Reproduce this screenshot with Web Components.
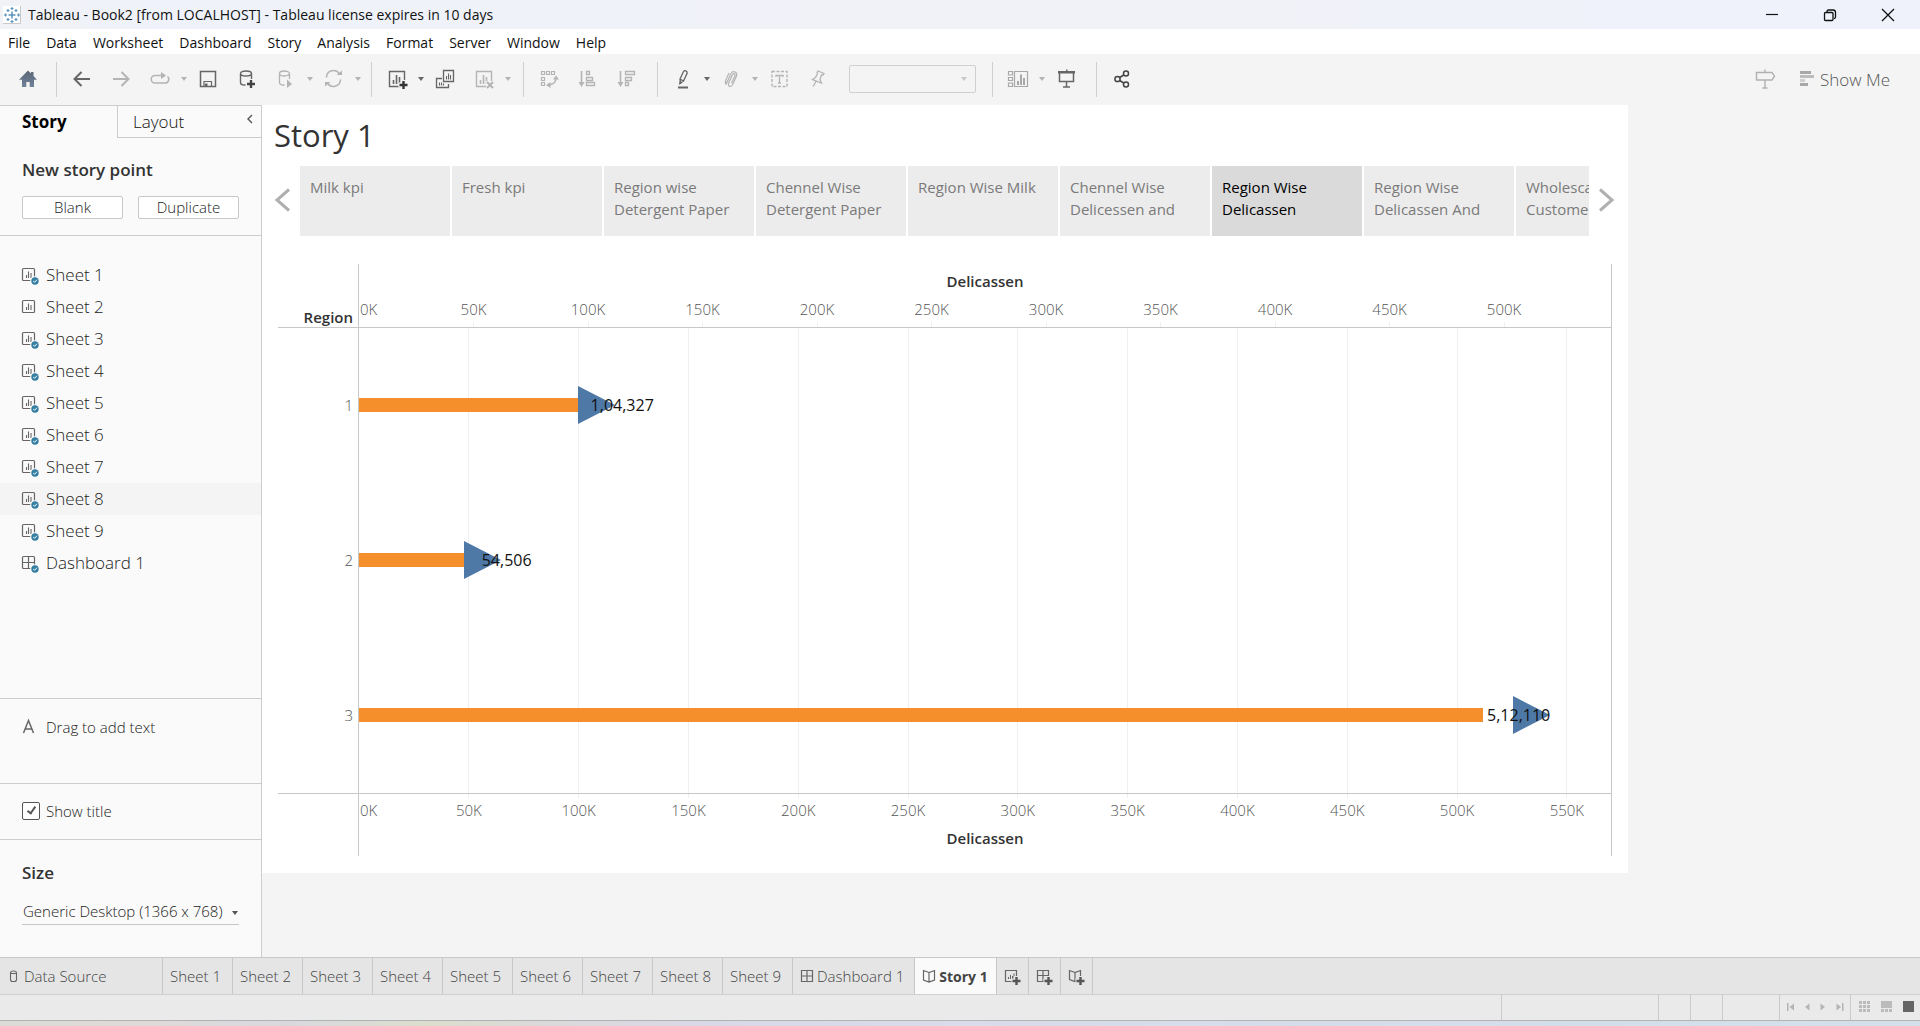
<!DOCTYPE html>
<html lang="en">
<head>
<meta charset="utf-8">
<title>Tableau - Book2</title>
<style>
  html, body { height: 100%; margin: 0; }
  body { font-family: "Open Sans", "Noto Sans", sans-serif; overflow: hidden; }
</style>
</head>
<body>
<tableau-app></tableau-app>

<script>
const G = '#666', L = '#b4b4b4';
const plus = (x, y, c = '#444') => `<path d="M${x} ${y - 4}v8M${x - 4} ${y}h8" stroke="${c}" stroke-width="2.4" fill="none"/>`;
const halo = (x, y) => `<path d="M${x} ${y - 5}v10M${x - 5} ${y}h10" stroke="var(--halo,#f4f4f4)" stroke-width="5" fill="none"/>`;
const stroke = (d, c = G, w = 1) => `<path d="${d}" fill="none" stroke="${c}" stroke-width="${w}"/>`;
const fill = (d, c = G) => `<path d="${d}" fill="${c}"/>`;
const chartBox = c => stroke('M4.5 4.5h15v15h-15z', c, 1.4) + stroke('M8.5 17v-4M11.5 17V8M14.5 17v-7M17 17v-3', c, 1.6);
const check = '<circle cx="16" cy="16" r="4.8" fill="#fafafa"/><circle cx="16" cy="16" r="3.7" fill="#367fa3"/><path d="M14.3 16l1.3 1.3 2.3-2.6" fill="none" stroke="#fff"/>';
const miniChart = '<rect x="3.5" y="3.5" width="12" height="12" rx="1" fill="none" stroke="#666" stroke-width="1.2"/>' + stroke('M7.5 13v-3M9.5 13V6.5M12 13V8', G, 1.1);
const miniGrid = '<rect x="3.5" y="3.5" width="12" height="12" rx="1" fill="none" stroke="#666" stroke-width="1.2"/>' + stroke('M9.5 3.5v12M3.5 9.5h12', G, 1.2);

const ICONS = {
  home: [24, '<defs><linearGradient id="h" x2="0" y2="1"><stop stop-color="#5a6674"/><stop offset="1" stop-color="#71839a"/></linearGradient></defs><path fill="url(#h)" d="M12 3.5l3 3V5h2.5v4l3.5 3.800h-3V20h-4.300v-5h-3.400v5H6v-7.200H3z"/>'],
  back: [24, stroke('M20 12H5M11.5 5l-7 7 7 7', G, 2)],
  forward: [24, stroke('M4 12h15M12.5 5l7 7-7 7', L, 2)],
  redo: [24, stroke('M14 8.5H7a3.700 3.700 0 0 0 0 7.5h10a3.700 3.700 0 0 0 2.5-6.5', L, 1.5) + fill('M13 5l5 3.5-5 3.5z', L)],
  save: [24, stroke('M4.5 4.5h15v15h-15z', G, 1.5) + stroke('M8 19v-4.5h7.5V19', G, 1.2) + fill('M9 16.5h2.5V19H9z')],
  dbadd: [24, stroke('M5.5 6.5v9q0 2.5 4 2.5h1M16.5 6.5V12M5.5 6.5a5.5 2.5 0 0 1 11 0a5.5 2.5 0 0 1-11 0z', G, 1.4) + plus(16, 17)],
  dbplay: [24, stroke('M5.5 6.5v9q0 2.5 4 2.5h1M15.5 6.5V12M5.5 6.5a5 2.5 0 0 1 10 0a5 2.5 0 0 1-10 0z', L, 1.3) + fill('M13 12.5v8.5l5-4z', L)],
  refresh: [24, stroke('M4.500 10.500a7 7 0 0 1 13-3.500M18.500 12.500a7 7 0 0 1-13 3.500', L, 1.5) + fill('M14.500 8h5.500V3.500zM8.500 15H3v4.500z', L)],
  chartadd: [24, chartBox(G) + halo(18.5, 18) + plus(18.5, 18, '#333')],
  duplicate: [24, stroke('M9 11.5H3.5v9h12V17', G, 1.3) + stroke('M10.5 3.5h10v11h-10z', G, 1.3) + stroke('M13.5 12.5V9M15.5 12.5V6.5M17.5 12.5V8M6.5 18.5v-3M8.5 18.5v-3M10.5 18.5v-2', G, 1.1)],
  chartx: [24, chartBox(L) + '<path d="M14 14h8v8h-8z" fill="#f4f4f4"/>' + stroke('M15 15l6 6M21 15l-6 6', L, 2)],
  swap: [24, stroke('M4.5 4.5h3v3h-3zM9.5 4.5h3v3h-3zM14.5 4.5h3v3h-3zM4.5 10.5h3v3h-3zM4.5 15.5h3v3h-3z', L, 1.2) + stroke('M19 11q0 6-7 7', L, 1.3) + fill('M16 12.5h6l-3-4zM13.5 15v6l-4.5-3z', L)],
  asc: [24, stroke('M5.5 4v12', L, 1.6) + fill('M2.5 15h6l-3 5z', L) + stroke('M10.5 4.5h3v3h-3zM10.5 10.5h6v3h-6zM10.5 15.5h8v3h-8z', L, 1.3)],
  desc: [24, stroke('M5.5 4v12', L, 1.6) + fill('M2.5 15h6l-3 5z', L) + stroke('M10.5 4.5h9v3h-9zM10.5 10.5h6v3h-6zM10.5 15.5h3v3h-3z', L, 1.3)],
  pen: [24, stroke('M9 12l3.500-7.500q.8-1.200 2.300-.6t1.400 2.100L12.500 14 9.500 16zM9 12l3.500 2', G, 1.3) + fill('M8.500 14l-.5 4 3-2zM7 19.5h10v2H7z')],
  clip: [24, stroke('M7 17.5l5-11q1.5-2.5 4-1.5t1.5 4l-4 9q-1.5 2-3 1.300t-1-3l4-8.5q1-1.5 2-1t.5 2l-3.5 7.5M7 17.5q-1.5-3 .5-6L10 6', L, 1.2)],
  textbox: [24, '<path d="M5 4.5h15v15H5z" fill="none" stroke="#b4b4b4" stroke-width="1.4" stroke-dasharray="3 1.5"/>' + stroke('M9 10V8.5h7V10M12.5 8.5V16M11 16h3', L, 1.3)],
  pin: [24, stroke('M12 4l6 2.500-1 1.500-1.5 0-1.5 4.5 1.5 3.500-9-3.500 3-2 2-4-.5-1zM10 14.500l-3 5', L, 1.3)],
  fit: [24, stroke('M2.5 4.5h4v3.5h-4zM2.5 10.5h4v3h-4zM2.5 16h4v3.5h-4zM8.5 4.5h13v15h-13z', '#a8a8a8', 1.2) + stroke('M12 18v-4M15 18V7.5M18 18v-7', '#a8a8a8', 2)],
  present: [24, fill('M4 4h17v2.5H4zM12 2.5h1.5V4H12z') + stroke('M5.5 6v8.5h14V6M12.5 14.5v5M9 20h7', G, 1.5)],
  share: [24, '<g fill="none" stroke="#444" stroke-width="1.5"><circle cx="7.5" cy="12" r="2.6"/><circle cx="16" cy="6.5" r="2.5"/><circle cx="16" cy="17.5" r="2.5"/><path d="M9.700 10.5l4-2.5M9.700 13.5l4 2.5"/></g>'],
  sign: [24, stroke('M3.5 5.5h15.5l2.5 3.700-2.5 3.800H3.5zM12 2.5v3M12 13v8M9.5 21h5', '#b0b0b0', 1.4)],
  showme: [16, fill('M1 0h11v3H1zM1 12h8v3H1z', '#a8a8a8') + fill('M1 4h14v3H1z', '#bcbcbc') + fill('M1 8h5v3H1z', '#cfcfcf')],
  sheet: [24, miniChart],
  sheetcheck: [24, miniChart + check],
  dashcheck: [24, miniGrid + check],
  letterA: [24, stroke('M4.5 16L9.500 3.5 14.500 16M6 12h7', G, 1.5)],
  collapse: [24, stroke('M15 8l-4 4 4 4', '#555', 1.4)],
  db: [14, stroke('M3.500 4v6.5q0 2 2 2h2q2 0 2-2V4a3 2 0 0 0-6 0zM3.500 4.5h6', G, 1.1)],
  grid: [14, stroke('M1.5 1.5h11v11h-11zM7 1.5v11M1.5 7h11', G, 1.2)],
  book: [14, stroke('M7 3.5L1.5 1.5v9.5l5.5 2 5.5-2V1.5zM7 3.5V13', G, 1.2)],
  addsheet: [20, stroke('M3.5 4.5h11v11h-11z', G, 1.2) + stroke('M6.5 13v-2M8.5 13V9M10.5 13v-3M12 13V7.5', G, 1) + halo(14.5, 15) + plus(14.5, 15, '#555')],
  adddash: [20, stroke('M3.5 4.5h11v11h-11zM9 4.5v11M3.5 9.5h11', G, 1.2) + halo(14.5, 15) + plus(14.5, 15, '#555')],
  addstory: [20, stroke('M9 6.5L3.5 4.5v9l5.5 2 5.5-2v-9zM9 6.5v9', G, 1.2) + halo(14.5, 15) + plus(14.5, 15, '#555')],
  prev: [24, stroke('M18 1.5L6 12l12 10.5', '#b0b0b0', 3)],
  next: [24, stroke('M6 1.5L18 12 6 22.5', '#b0b0b0', 3)],
  min: [14, stroke('M1 6.5h12', '#111', 1.2)],
  restore: [14, stroke('M4 4V3.5Q4 2 5.5 2H10q2.5 0 2.5 2.5V9q0 1.5-1.5 1.5M1.5 5.5q0-1 1-1H9q1 0 1 1v6q0 1-1 1H2.5q-1 0-1-1z', '#111', 1.3)],
  close: [14, stroke('M1 1l12 12M13 1L1 13', '#111', 1.3)],
  caret: [8, fill('M1 2h6L4 6z', 'currentColor')],
  first: [12, fill('M2 2h1.5v8H2zM9 2.5v7L4.5 6z', '#b4b4b4')],
  before: [12, fill('M8.5 2.5v7L4 6z', '#b4b4b4')],
  after: [12, fill('M3.5 2.5v7L8 6z', '#b4b4b4')],
  last: [12, fill('M9 2h1.5v8H9zM3.5 2.5v7L8 6z', '#b4b4b4')],
  tiles: [12, fill('M0 0h3v3H0zM4 0h3v3H4zM8 0h3v3H8zM0 4h3v3H0zM4 4h3v3H4zM8 4h3v3H8zM0 8h3v3H0zM4 8h3v3H4zM8 8h3v3H8z', '#bbb')],
  film: [12, fill('M0 0h11v7H0zM0 8h3v3H0zM4 8h3v3H4zM8 8h3v3H8z', '#bbb')],
  full: [12, fill('M0 0h11v11H0z', '#666')],
  logo: [18, '<path d="M0 0h18v18H0z" fill="#fff"/><path d="M0 17.5h17.5V0" fill="none" stroke="#c8c8c8"/><g fill="none" stroke="#5a93bb" stroke-width="1.2"><path d="M9 5.5v7M5.5 9h7" stroke-width="1.5"/><path d="M9 1v3M7.5 2.5h3M9 14v3M7.5 15.5h3M1 9h3M2.5 7.5v3M14 9h3M15.5 7.5v3M5 3v3M3.5 4.5h3M13 3v3M11.5 4.5h3M5 12v3M3.5 13.5h3M13 12v3M11.5 13.5h3"/></g>']
};

const BASE = `
  *, *::before, *::after { box-sizing: border-box; }
  button, select, input { font: inherit; color: inherit; margin: 0; }
  button { background: none; border: 0; padding: 0; }
`;
function define(name, css, html, after) {
  customElements.define(name, class extends HTMLElement {
    constructor() {
      super();
      const root = this.attachShadow({ mode: 'open' });
      const t = document.createElement('template');
      t.innerHTML = `<style>${BASE}${css}</style>${html}`;
      root.append(t.content.cloneNode(true));
    }
    connectedCallback() { if (after) after(this, this.shadowRoot); }
  });
}

customElements.define('ui-icon', class extends HTMLElement {
  static observedAttributes = ['name'];
  constructor() { super(); this.attachShadow({ mode: 'open' }); }
  attributeChangedCallback(attr, old, name) {
    const [size, body] = ICONS[name];
    this.shadowRoot.innerHTML = `<style>:host{display:inline-flex;flex:none}svg{display:block}</style>
      <svg width="${size}" height="${size}" viewBox="0 0 ${size} ${size}" aria-hidden="true">${body}</svg>`;
  }
});

define('title-bar', `
  :host { display: flex; align-items: center; height: 29px; background: linear-gradient(90deg,#f1f2f6,#eff2fa 8%,#f1f2f7 60%,#eff2fb 88%); font-size: 14px; color: #111; padding: 0 3px; gap: 7px; }
  span { flex: 1; }
  div { display: flex; }
  button { width: 58px; height: 29px; display: grid; place-items: center; }
`, `<ui-icon name="logo"></ui-icon><span><slot></slot></span>
  <div><button aria-label="Minimize"><ui-icon name="min"></ui-icon></button><button aria-label="Restore"><ui-icon name="restore"></ui-icon></button><button aria-label="Close"><ui-icon name="close"></ui-icon></button></div>`);

define('menu-bar', `
  :host { display: block; background: #fff; color: #111; font-size: 14px; }
  nav { display: flex; height: 25px; align-items: center; padding: 1px 0 0 8px; gap: 16px; }
`, `<nav>${['File', 'Data', 'Worksheet', 'Dashboard', 'Story', 'Analysis', 'Format', 'Server', 'Window', 'Help'].map(t => `<button>${t}</button>`).join('')}</nav>`);

const tb = (n, label, c) => `<button class="t" aria-label="${label}"><ui-icon name="${n}"></ui-icon></button>` + (c ? `<button class="c" style="color:${c}" aria-label="${label} options"><ui-icon name="caret"></ui-icon></button>` : '');
define('tool-bar', `
  :host { display: flex; align-items: center; height: 51px; padding-bottom: 1px; background: #f4f4f4; font-size: 17px; font-weight: 300; color: #555; }
  .g { display: flex; align-items: center; gap: 1px; padding: 0 11px 0 6px; height: 35px; border-right: 1px solid #d0d0d0; }
  .g.tight { padding-right: 9px; }
  .g.home { padding: 0 9px; }
  .g.end { border: 0; flex: 1; }
  .t { width: 38px; height: 35px; display: grid; place-items: center; }
  .c { width: 8px; height: 35px; display: grid; place-items: center; }
  .box { display: grid; grid-template-columns: 127px; align-items: center; margin: 0 5px 0 11px; color: #c8c8c8; }
  .box > * { grid-area: 1/1; }
  .box ui-icon { justify-self: end; margin-right: 8px; pointer-events: none; }
  select { appearance: none; height: 28px; border: 1px solid #d0d0d0; border-radius: 2px; background: #f4f4f4; opacity: 1; }
  .show { display: flex; align-items: center; gap: 5px; margin: 0 30px 0 15px; }
`, `
  <div class="g home">${tb('home', 'Home')}</div>
  <div class="g tight">${tb('back', 'Undo')}${tb('forward', 'Redo')}${tb('redo', 'Replay', L)}${tb('save', 'Save')}${tb('dbadd', 'New data source')}${tb('dbplay', 'Pause updates', L)}${tb('refresh', 'Run update', L)}</div>
  <div class="g">${tb('chartadd', 'New worksheet', G)}${tb('duplicate', 'Duplicate')}${tb('chartx', 'Clear', L)}</div>
  <div class="g">${tb('swap', 'Swap')}${tb('asc', 'Sort ascending')}${tb('desc', 'Sort descending')}</div>
  <div class="g">${tb('pen', 'Highlight', G)}${tb('clip', 'Group', L)}${tb('textbox', 'Labels')}${tb('pin', 'Fix axes')}<label class="box"><select aria-label="Fit" disabled><option></option></select><ui-icon name="caret"></ui-icon></label></div>
  <div class="g">${tb('fit', 'Show cards', L)}${tb('present', 'Presentation mode')}</div>
  <div class="g end">${tb('share', 'Share')}</div>
  ${tb('sign', 'Guide')}
  <button class="show"><ui-icon name="showme"></ui-icon>Show Me</button>`);

define('sheet-item', `
  :host { display: block; }
  :host([hover]) { background: #f4f4f4; }
  button { display: flex; align-items: center; width: 100%; height: 32px; padding: 0 0 2px 19px; gap: 3px; font-size: 17px; font-weight: 300; color: #222; text-align: left; }
  ui-icon { margin-top: 6px; }
`, '<button><ui-icon></ui-icon><slot></slot></button>', (el, root) => root.querySelector('ui-icon').setAttribute('name', el.getAttribute('icon')));

define('side-panel', `
  :host { display: flex; flex-direction: column; width: 262px; flex: none; background: #fafafa; border-right: 1px solid #cdcdcd; border-top: 1px solid #cdcdcd; font-size: 15px; font-weight: 300; color: #222; }
  .tabs { display: flex; height: 32px; font-size: 17px; }
  .tabs .on { width: 117px; padding: 0 0 2px 22px; text-align: left; font-weight: 700; color: #000; }
  .tabs .off { flex: 1; display: flex; align-items: center; border-left: 1px solid #cdcdcd; border-bottom: 1px solid #cdcdcd; }
  .off .lay { flex: 1; padding-left: 15px; text-align: left; color: #111; }
  section { border-bottom: 1px solid #cdcdcd; padding: 0 22px; }
  h2 { margin: 0; font-size: 17px; line-height: 24px; font-weight: 600; color: #333; }
  .new { height: 98px; padding-top: 20px; }
  .pair { display: flex; gap: 15px; margin-top: 14px; }
  .pair button { flex: 1; height: 23px; line-height: 21px; border: 1px solid #c8c8c8; border-radius: 2px; background: #fff; }
  .list { flex: 1; padding: 23px 0 0; }
  .drag { height: 85px; padding: 15px 19px; display: flex; align-items: flex-start; gap: 3px; line-height: 26px; }
  .drag ui-icon { margin-top: 3px; }
  .title { height: 56px; display: flex; align-items: center; gap: 6px; padding-bottom: 2px; }
  input { appearance: none; width: 18px; height: 18px; border: 1px solid #555; border-radius: 2px; background: #fff; display: grid; place-items: center; }
  input:checked::after { content: ""; width: 5px; height: 9px; border: solid #555; border-width: 0 2px 2px 0; transform: rotate(35deg); margin-bottom: 3px; }
  .size { height: 117px; padding-top: 21px; border: 0; }
  .pick { display: grid; align-items: center; margin-top: 15px; color: #555; }
  .pick > * { grid-area: 1/1; }
  .pick ui-icon { justify-self: end; pointer-events: none; }
  select { appearance: none; border: 0; border-bottom: 1px solid #c8c8c8; background: none; height: 25px; padding: 0 0 2px 1px; color: #222; width: 100%; }
`, `
  <div class="tabs"><button class="on">Story</button><div class="off"><button class="lay">Layout</button><button aria-label="Collapse"><ui-icon name="collapse"></ui-icon></button></div></div>
  <section class="new"><h2>New story point</h2><div class="pair"><button>Blank</button><button>Duplicate</button></div></section>
  <section class="list">
    ${[1, 2, 3, 4, 5, 6, 7, 8, 9].map(n => `<sheet-item icon="${n === 2 ? 'sheet' : 'sheetcheck'}"${n === 8 ? ' hover' : ''}>Sheet ${n}</sheet-item>`).join('')}
    <sheet-item icon="dashcheck">Dashboard 1</sheet-item>
  </section>
  <section class="drag"><ui-icon name="letterA"></ui-icon><span>Drag to add text</span></section>
  <section class="title"><input type="checkbox" id="st" checked><label for="st">Show title</label></section>
  <section class="size"><h2>Size</h2><div class="pick"><select aria-label="Size"><option>Generic Desktop (1366 x 768)</option></select><ui-icon name="caret"></ui-icon></div></section>`);

define('story-point', `
  :host { display: block; flex: none; width: 150px; height: 70px; background: #ececec; color: #7a7a7a; }
  :host([active]) { background: #dadada; color: #000; }
  button { display: flex; align-items: flex-start; width: 100%; height: 100%; padding: 10px 10px 0; font-size: 15px; line-height: 22px; text-align: left; }
`, '<button><span><slot></slot></span></button>');

define('story-nav', `
  :host { display: flex; align-items: center; }
  .strip { flex: 1; min-width: 0; display: flex; gap: 2px; overflow: hidden; }
  .arrow { width: 38px; display: flex; justify-content: center; padding: 0 0 2px 4px; flex: none; }
  .strip + .arrow { width: 39px; padding: 0 5px 2px 0; }
`, '<button class="arrow" aria-label="Previous"><ui-icon name="prev"></ui-icon></button><div class="strip"><slot></slot></div><button class="arrow" aria-label="Next"><ui-icon name="next"></ui-icon></button>');

const TOP = 546700, BOT = 570100;
const ticks = (max, n) => Array.from({ length: n + 1 }, (_, i) => ({ x: (i * 5e6 / max).toFixed(3) + '%', t: i * 50 + 'K', i }));
const label = (k, y) => k.i ? `<text x="${k.x}" y="${y}" text-anchor="middle">${k.t}</text>` : `<text x="1" y="${y}">0K</text>`;
define('mark-row', `
  :host { display: grid; grid-template-columns: 80px 1fr; flex: 1; align-items: center; padding-bottom: 2px; font-size: 15px; }
  .n { text-align: right; padding-right: 5px; color: #555; font-weight: 300; }
  .lane { position: relative; display: flex; align-items: center; height: 100%; margin-left: 1px; }
  .bar { height: 14px; background: #f48f2c; }
  svg { position: absolute; overflow: visible; }
  span { position: absolute; color: #111; font-size: 16px; }
`, '<div class="n"></div><div class="lane"><div class="bar"></div><svg width="37" height="38" viewBox="0 0 37 38"><path d="M0 0v38L37 19z" fill="#4e79a7"/></svg><span></span></div>', (el, root) => {
  const a = n => el.getAttribute(n);
  root.querySelector('.n').textContent = a('region');
  root.querySelector('.bar').style.width = a('bar') + '%';
  root.querySelector('svg').style.left = a('arrow') + '%';
  const s = root.querySelector('span');
  s.style.left = a('text') + '%';
  s.textContent = a('value');
});

define('bar-chart', `
  :host { display: flex; flex-direction: column; height: 592px; font-size: 15px; border-right: 1px solid #c8c8c8;
    background: linear-gradient(#c8c8c8,#c8c8c8) 80px 0/1px 100% no-repeat; }
  svg { display: block; width: 100%; overflow: visible; }
  text { fill: #555; font-weight: 300; font-size: 15px; }
  text.h { fill: #333; font-weight: 600; }
  line { stroke: #efefef; shape-rendering: crispEdges; }
  .head, .foot { display: grid; grid-template-columns: 81px 1fr; }
  .head { border-bottom: 1px solid #c8c8c8; }
  .region { align-self: end; text-align: right; padding-right: 6px; font-weight: 600; color: #333; line-height: 20px; }
  .plot { height: 465px; display: flex; flex-direction: column; position: relative; }
  .lines { position: absolute; inset: 0; padding-left: 81px; }
  .foot { border-top: 1px solid #c8c8c8; }
`, `
  <div class="head"><div class="region">Region</div><svg height="63"><text class="h" x="50%" y="23" text-anchor="middle">Delicassen</text>${ticks(TOP, 10).map(k => label(k, 51) + (k.i ? `<line x1="${k.x}" x2="${k.x}" y1="58" y2="63"/>` : '')).join('')}</svg></div>
  <div class="plot"><div class="lines"><svg height="465">${ticks(BOT, 11).slice(1).map(k => `<line x1="${k.x}" x2="${k.x}" y1="0" y2="465"/>`).join('')}</svg></div>
    <mark-row region="1" bar="17.5" arrow="17.5" text="18.5" value="1,04,327"></mark-row>
    <mark-row region="2" bar="8.4" arrow="8.4" text="9.8" value="54,506"></mark-row>
    <mark-row region="3" bar="89.8" arrow="92.2" text="90.1" value="5,12,110"></mark-row>
  </div>
  <div class="foot"><div></div><svg height="62"><text class="h" x="50%" y="50" text-anchor="middle">Delicassen</text>${ticks(BOT, 11).map(k => label(k, 22) + (k.i ? `<line x1="${k.x}" x2="${k.x}" y1="0" y2="4"/>` : '')).join('')}</svg></div>`);

define('story-canvas', `
  :host { display: block; width: 1366px; height: 768px; background: #fff; }
  h1 { margin: 0; padding: 9px 13px 0 12px; height: 61px; font-size: 31px; line-height: 42px; font-weight: 400; color: #333; }
  bar-chart { margin: 28px 16px 0; }
`, `<h1>Story 1</h1>
  <story-nav>
    <story-point>Milk kpi</story-point><story-point>Fresh kpi</story-point><story-point>Region wise Detergent Paper</story-point><story-point>Chennel Wise Detergent Paper</story-point><story-point>Region Wise Milk</story-point><story-point>Chennel Wise Delicessen and</story-point><story-point active>Region Wise Delicassen</story-point><story-point>Region Wise Delicassen And</story-point><story-point>Wholescale Customer</story-point>
  </story-nav>
  <bar-chart></bar-chart>`);

define('sheet-tab', `
  :host { display: flex; border-right: 1px solid #c8c8c8; font-size: 15px; font-weight: 300; color: #444; }
  :host([active]) { background: #fafafa; font-weight: 700; font-size: 14px; }
  :host([wide]) { width: 163px; }
  :host([add]) { width: 32px; --halo: #e5e5e5; }
  button { flex: 1; display: flex; align-items: center; gap: 3px; padding: 0 10px 0 7px; white-space: nowrap; }
  :host([add]) button { padding: 0; justify-content: center; }
  :host([active]) button { padding: 0 8px 0 7px; }
`, '<button><slot></slot></button>', (el, root) => {
  if (el.hasAttribute('label')) root.querySelector('button').setAttribute('aria-label', el.getAttribute('label'));
});

define('tab-strip', `
  :host { display: flex; height: 38px; background: #e5e5e5; border-top: 1px solid #c8c8c8; border-bottom: 1px solid #d0d0d0; }
  .even { min-width: 70px; }
`, `<sheet-tab wide><ui-icon name="db"></ui-icon> Data Source</sheet-tab>
  ${[1, 2, 3, 4, 5, 6, 7, 8, 9].map(n => `<sheet-tab class="even">Sheet ${n}</sheet-tab>`).join('')}
  <sheet-tab><ui-icon name="grid"></ui-icon> Dashboard 1</sheet-tab>
  <sheet-tab active><ui-icon name="book"></ui-icon> Story 1</sheet-tab>
  <sheet-tab add label="New worksheet"><ui-icon name="addsheet"></ui-icon></sheet-tab><sheet-tab add label="New dashboard"><ui-icon name="adddash"></ui-icon></sheet-tab><sheet-tab add label="New story"><ui-icon name="addstory"></ui-icon></sheet-tab>`);

define('status-bar', `
  :host { display: block; }
  .row { display: flex; justify-content: flex-end; height: 26px; background: #eaeaea; border-bottom: 1px solid #b0b2b4; }
  .cell { border-left: 1px solid #cacaca; }
  .a { width: 157px; } .b { width: 32px; } .c { width: 57px; }
  .nav { width: 71px; display: flex; align-items: center; padding: 0 0 2px 5px; gap: 4px; }
  .view { width: 70px; display: flex; align-items: center; padding: 0 0 2px 8px; gap: 10px; }
  .view button, .nav button { display: flex; }
  .strip { height: 5px; background: linear-gradient(90deg,#dcdcd6,#dfdad8 8%,#d8d8de 14%,#d9dbd8 18%,#dbdfcd 22%,#dbd8d8 28%,#d9d9e6 36%,#d9dcea 50%,#d5deea 75%,#d3e0ea); }
`, `<div class="row"><div class="cell a"></div><div class="cell b"></div><div class="cell b"></div><div class="cell c"></div>
  <div class="cell nav">${[['first', 'First'], ['before', 'Previous'], ['after', 'Next'], ['last', 'Last']].map(([n, t]) => `<button aria-label="${t}"><ui-icon name="${n}"></ui-icon></button>`).join('')}</div>
  <div class="cell view">${[['tiles', 'Sheet sorter'], ['film', 'Filmstrip'], ['full', 'Tabs']].map(([n, t]) => `<button aria-label="${t}"><ui-icon name="${n}"></ui-icon></button>`).join('')}</div></div>
  <div class="strip"></div>`);

define('tableau-app', `
  :host { display: flex; flex-direction: column; height: 100vh; background: #f4f4f4; }
  main { flex: 1; min-height: 0; display: flex; }
`, `<title-bar>Tableau - Book2 [from LOCALHOST] - Tableau license expires in 10 days</title-bar>
  <menu-bar></menu-bar><tool-bar></tool-bar>
  <main><side-panel></side-panel><story-canvas></story-canvas></main>
  <tab-strip></tab-strip><status-bar></status-bar>`);
</script>
</body>
</html>
